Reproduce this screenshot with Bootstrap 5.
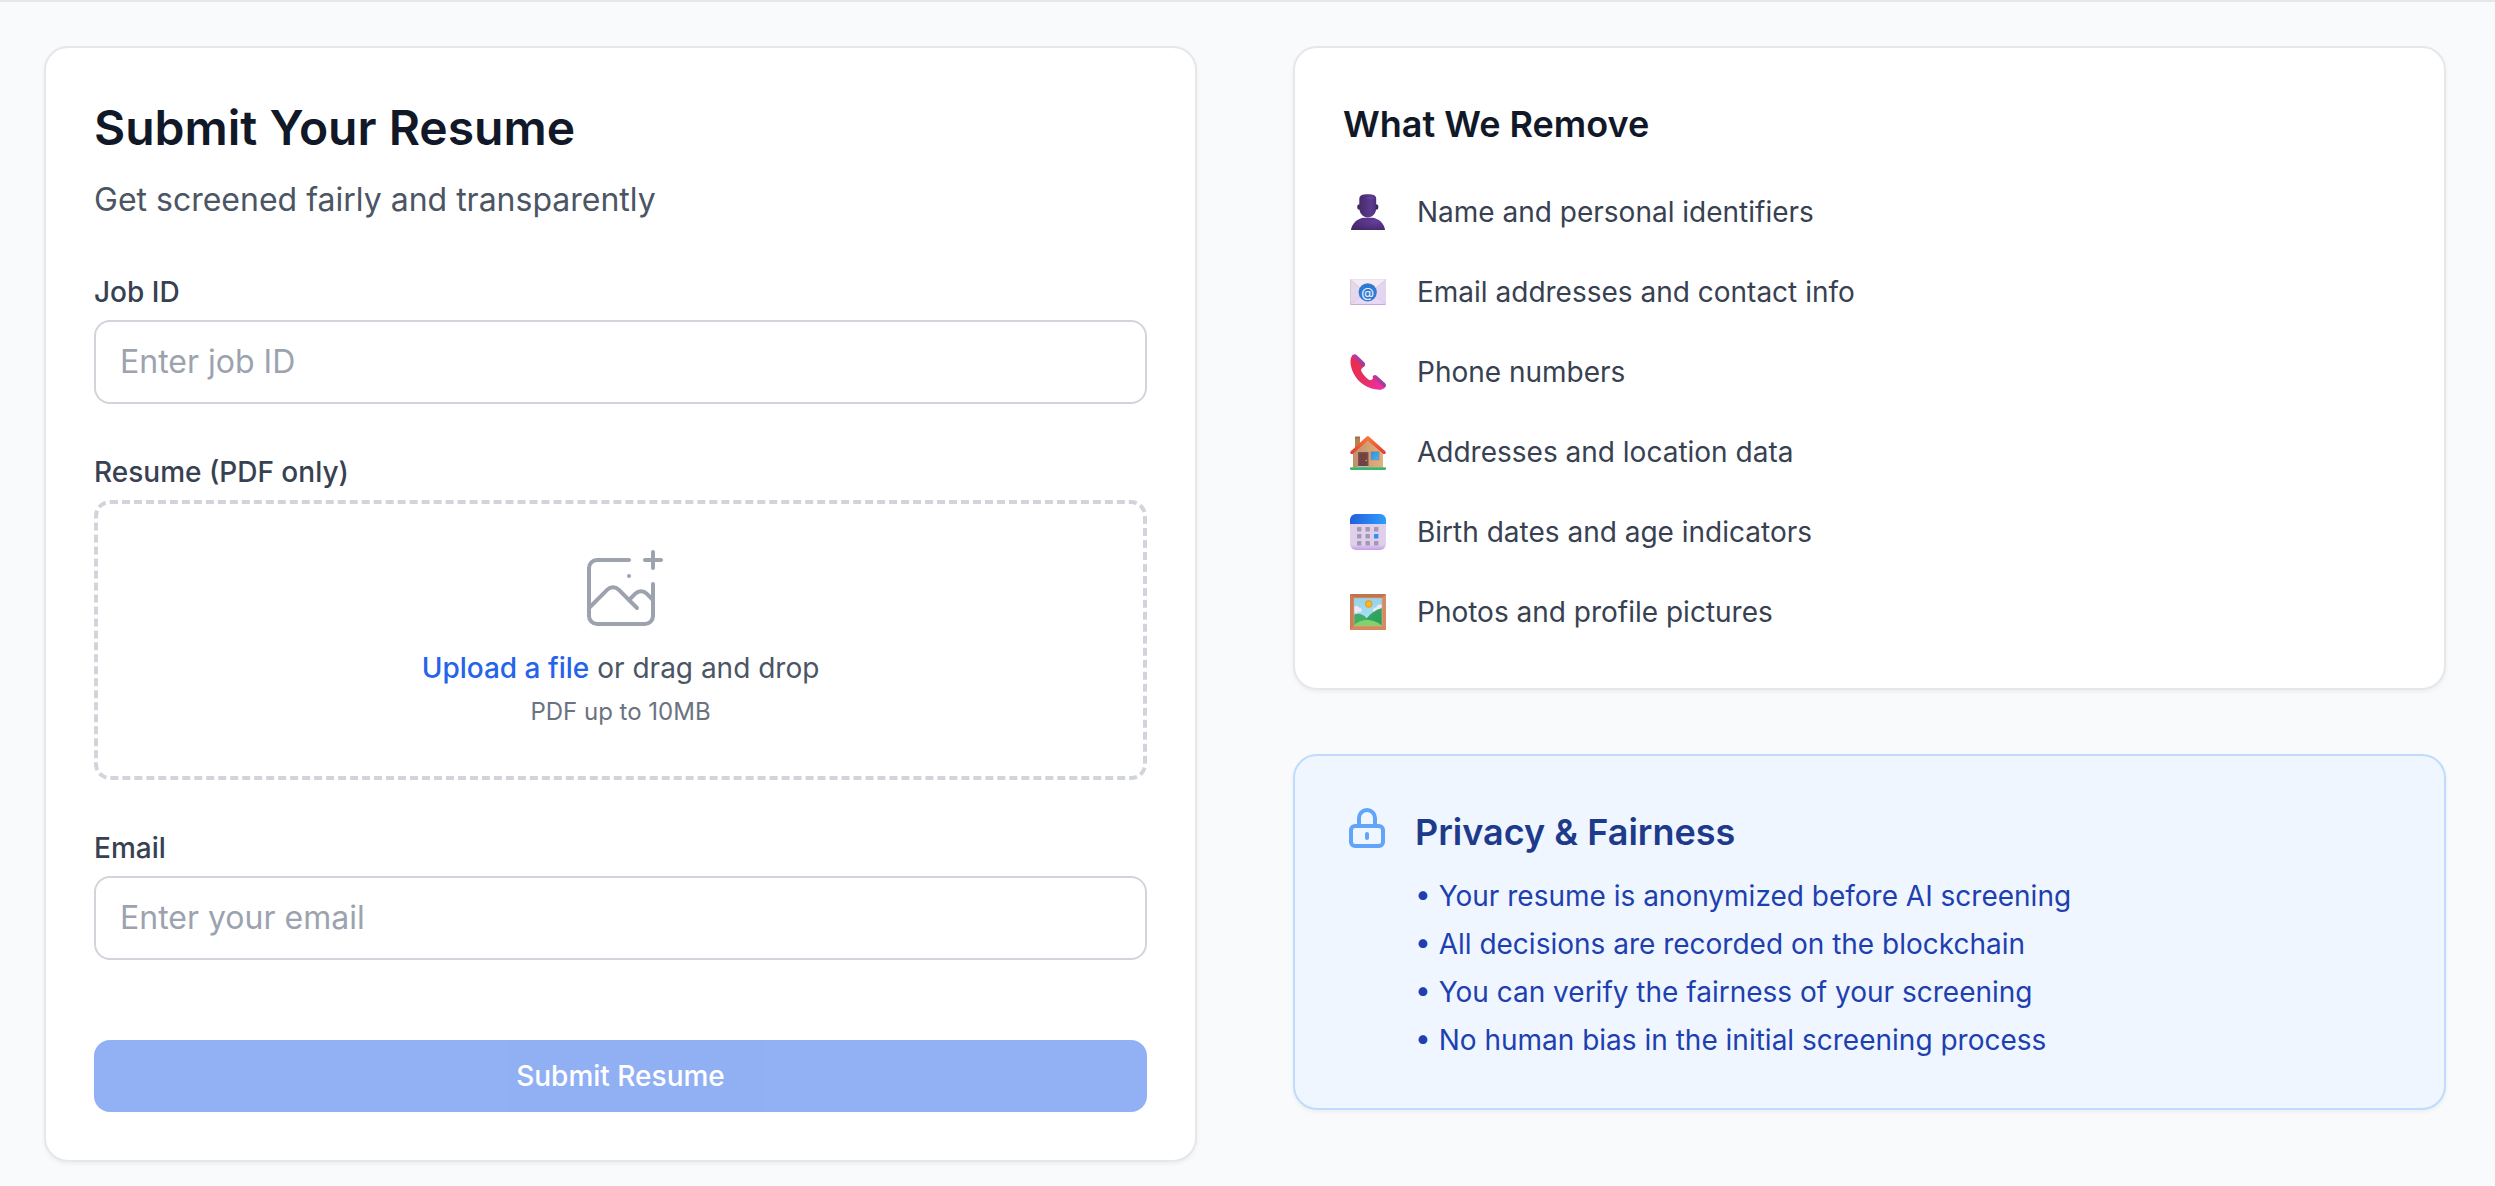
<!DOCTYPE html>
<html lang="en">
<head>
<meta charset="utf-8">
<meta name="viewport" content="width=device-width, initial-scale=1">
<title>Submit Your Resume</title>
<link href="https://cdn.jsdelivr.net/npm/bootstrap@5.3.0/dist/css/bootstrap.min.css" rel="stylesheet">
<style>
  body {
    font-family: Inter, "Liberation Sans", sans-serif;
    font-size: 28px;
    line-height: 40px;
    color: #374151;
    background: #f9fafb;
    border-top: 2px solid #e5e7eb;
  }
  .page-main { padding: 44px 49px 16px 44px; }
  .page-grid { --bs-gutter-x: 96px; }
  .stack-lg { gap: 64px; }
  .stack-md { gap: 48px; }
  .panel {
    --bs-card-border-width: 2px;
    --bs-card-border-color: #e5e7eb;
    --bs-card-border-radius: 24px;
    --bs-card-inner-border-radius: 22px;
    --bs-card-spacer-x: 48px;
    --bs-card-spacer-y: 48px;
    --bs-card-color: #374151;
    box-shadow: 0 2px 4px rgba(0, 0, 0, .05);
  }
  .panel-info {
    --bs-card-border-color: #bfdbfe;
    --bs-card-bg: #eff6ff;
    --bs-card-color: #1e40af;
  }
  .page-title { font-size: 48px; line-height: 64px; font-weight: 600; color: #111827; margin-bottom: 16px; }
  .page-sub { font-size: 32px; line-height: 48px; color: #4b5563; }
  .panel-title { font-size: 36px; line-height: 56px; font-weight: 600; color: #111827; }
  .panel-info .panel-title { color: #1e3a8a; margin-bottom: 16px; }
  .field-label { font-weight: 500; margin-bottom: 8px; display: block; }
  .field-input {
    font-size: 32px; line-height: 48px; padding: 16px 24px;
    border: 2px solid #d1d5db; border-radius: 16px; color: #111827;
  }
  .field-input::placeholder { color: #9ca3af; }
  .drop-zone { border: 4px dashed #d1d5db; border-radius: 16px; padding: 40px 48px 48px; gap: 8px; color: #4b5563; }
  .upload-link { color: #2563eb; font-weight: 500; cursor: pointer; }
  .drop-row { gap: 8px; }
  .drop-note { font-size: 24px; line-height: 32px; color: #6b7280; }
  .btn-submit {
    --bs-btn-font-size: 28px;
    --bs-btn-line-height: 40px;
    --bs-btn-font-weight: 500;
    --bs-btn-padding-y: 16px;
    --bs-btn-border-width: 0;
    --bs-btn-border-radius: 16px;
    --bs-btn-disabled-bg: #2563eb;
    --bs-btn-disabled-color: #fff;
    --bs-btn-disabled-opacity: .5;
    margin-top: 32px;
  }
  .remove-list { gap: 24px; margin-top: 32px; }
  .remove-list li { gap: 24px; min-height: 56px; }
  .icon-box { width: 50px; }
  .bullet-list li::before { content: "•\00a0"; }
  .bullet-list li + li { margin-top: 8px; }
</style>
</head>
<body>
<main class="page-main">
  <div class="row page-grid align-items-start">
    <div class="col-lg-6">
      <section class="card panel">
        <div class="card-body">
          <h1 class="page-title">Submit Your Resume</h1>
          <p class="page-sub mb-5">Get screened fairly and transparently</p>
          <form class="d-flex flex-column stack-md">
            <div>
              <label class="field-label" for="jobId">Job ID</label>
              <input class="form-control field-input" id="jobId" type="text" placeholder="Enter job ID">
            </div>
            <div>
              <span class="field-label" id="resumeLabel">Resume (PDF only)</span>
              <div class="drop-zone d-flex flex-column align-items-center">
                <svg width="96" height="96" viewBox="0 0 48 48" fill="none" stroke="#9ca3af" stroke-width="2" stroke-linecap="round" stroke-linejoin="round" aria-hidden="true"><path d="M28 8H12a4 4 0 00-4 4v20m32-12v8m0 0v8a4 4 0 01-4 4H12a4 4 0 01-4-4v-4m32-4l-3.172-3.172a4 4 0 00-5.656 0L28 28M8 32l9.172-9.172a4 4 0 015.656 0L28 28m0 0l4 4m4-24h8m-4-4v8m-12 4h.02"/></svg>
                <div class="d-flex flex-wrap justify-content-center drop-row">
                  <label class="upload-link" for="resume">Upload a file</label>
                  <input class="visually-hidden" id="resume" type="file" accept=".pdf" aria-describedby="resumeLabel">
                  <span>or drag and drop</span>
                </div>
                <div class="drop-note">PDF up to 10MB</div>
              </div>
            </div>
            <div>
              <label class="field-label" for="email">Email</label>
              <input class="form-control field-input" id="email" type="email" placeholder="Enter your email">
            </div>
            <button class="btn btn-primary btn-submit w-100" type="submit" disabled>Submit Resume</button>
          </form>
        </div>
      </section>
    </div>

    <div class="col-lg-6 d-flex flex-column stack-lg mt-5 mt-lg-0">
      <section class="card panel">
        <div class="card-body">
          <h2 class="panel-title mb-0">What We Remove</h2>
          <ul class="remove-list list-unstyled d-flex flex-column mb-0">
            <li class="d-flex align-items-center">
              <span class="icon-box d-flex justify-content-center flex-shrink-0">
                <svg width="36" height="36" viewBox="0 0 36 36" aria-hidden="true">
                  <defs>
                    <linearGradient id="headFill" x1="0" x2="1" y1="0" y2="0"><stop offset="0" stop-color="#472a68"/><stop offset=".7" stop-color="#5b3a90"/><stop offset="1" stop-color="#4d2d78"/></linearGradient>
                    <radialGradient id="bodyFill" cx=".7" cy=".3" r=".8"><stop offset="0" stop-color="#653f9c"/><stop offset="1" stop-color="#45276a"/></radialGradient>
                  </defs>
                  <path d="M1 36C1.500 29.500 8 24 14 23.700h8C28.500 24 34.500 29.500 35 36z" fill="url(#bodyFill)"/>
                  <ellipse cx="9" cy="13" rx="1.800" ry="2.800" fill="#3d2261"/><ellipse cx="26.600" cy="13" rx="1.800" ry="2.800" fill="#3d2261"/>
                  <path d="M9.300 5C9.300 1.500 12 .300 17.800.300S26.200 1.500 26.200 5v9c0 5.500-4 9.500-8.400 9.500S9.300 19.500 9.300 14z" fill="url(#headFill)"/>
                  <ellipse cx="20.500" cy="4" rx="4" ry="1.300" fill="#6b48a4" opacity=".6"/>
                </svg>
              </span>
              <span>Name and personal identifiers</span>
            </li>
            <li class="d-flex align-items-center">
              <span class="icon-box d-flex justify-content-center flex-shrink-0">
                <svg width="36" height="36" viewBox="0 0 36 36" aria-hidden="true">
                  <defs>
                    <linearGradient id="mailFill" x1="0" x2="1" y1="0" y2="1"><stop offset="0" stop-color="#e6dbe6"/><stop offset="1" stop-color="#e2d2f6"/></linearGradient>
                    <linearGradient id="mailEdge" x1="0" x2="1" y1="0" y2="0"><stop offset="0" stop-color="#cbb0c8"/><stop offset="1" stop-color="#cba2f3"/></linearGradient>
                  </defs>
                  <rect y="5" width="36" height="26" rx="1.500" fill="url(#mailEdge)"/>
                  <rect x=".5" y="5" width="35.500" height="25" rx="1.500" fill="url(#mailFill)"/>
                  <path d="M.5 29.500 14 19h8l13.500 10.500z" fill="#ead9f4"/>
                  <path d="M.8 5.500 16 18.500q2 1.500 4 0L35.500 5.500z" fill="#f3ebf3"/>
                  <path d="M.8 6 16 19q2 1.500 4 0L35.500 6M1 29.500 13 20.500M35 29.500 23 20.500" fill="none" stroke="#d4c4da" stroke-width=".7"/>
                  <circle cx="17.700" cy="18.300" r="9.100" fill="#2f7bd2"/>
                  <text x="17.700" y="22.600" text-anchor="middle" font-family="Inter, sans-serif" font-size="13" font-weight="500" fill="#e4ecfa">@</text>
                </svg>
              </span>
              <span>Email addresses and contact info</span>
            </li>
            <li class="d-flex align-items-center">
              <span class="icon-box d-flex justify-content-center flex-shrink-0">
                <svg width="36" height="36" viewBox="0 0 36 36" aria-hidden="true">
                  <defs>
                    <linearGradient id="phoneFill" x1="0" x2="1" y1=".2" y2=".9"><stop offset="0" stop-color="#f02a4c"/><stop offset=".5" stop-color="#e33163"/><stop offset="1" stop-color="#f42bb0"/></linearGradient>
                    <linearGradient id="phoneCap" x1="0" x2="1" y1="0" y2="1"><stop offset="0" stop-color="#c733a0"/><stop offset="1" stop-color="#8f4596"/></linearGradient>
                  </defs>
                  <path d="M3 1C.5 3 .2 7 .8 11c1.400 8 5.700 14.500 12.200 19.300 5 3.700 11.500 5.700 17.500 5.400 2.500-.2 4.500-1.700 5.300-3.700L25 22l-3 3.500c-1 1-2.300.8-3.500-.1-3-2.300-5.300-4.800-7-7.900-.7-1.300-.5-2.300.5-3.200L15 11.500z" fill="url(#phoneFill)"/>
                  <path d="M2.500 1.300C3.800-.1 5.300-.2 6.600.9l7.600 7.400c1.300 1.300 1.200 2.800 0 3.900-.6.600-1.200.6-1.900 0L2.700 3.300c-.7-.7-.8-1.400-.2-2z" fill="url(#phoneCap)"/>
                  <path d="M23 22c1.100-1.200 2.500-1.300 3.800-.2l8 7.200c1.400 1.200 1.500 2.500.5 3.800-.5.600-1.200.6-1.800 0l-10.300-8.900c-.7-.6-.8-1.200-.2-1.900z" fill="url(#phoneCap)"/>
                </svg>
              </span>
              <span>Phone numbers</span>
            </li>
            <li class="d-flex align-items-center">
              <span class="icon-box d-flex justify-content-center flex-shrink-0">
                <svg width="36" height="36" viewBox="0 0 36 36" aria-hidden="true">
                  <defs>
                    <linearGradient id="wallFill" x1="0" x2="1" y1="0" y2="0"><stop offset="0" stop-color="#c08f68"/><stop offset="1" stop-color="#e3b181"/></linearGradient>
                    <linearGradient id="roofFill" x1="0" x2="0" y1="0" y2="1"><stop offset="0" stop-color="#ff7d35"/><stop offset="1" stop-color="#dc3a35"/></linearGradient>
                    <linearGradient id="paneFill" x1="0" x2="1" y1="0" y2="1"><stop offset="0" stop-color="#2e8fe0"/><stop offset="1" stop-color="#38b6ff"/></linearGradient>
                  </defs>
                  <rect x="5" y="3" width="5" height="12" rx=".5" fill="#b18355"/><rect x="5" y="2.500" width="5" height="2" rx=".5" fill="#9d6e47"/>
                  <path d="M3 18 17.800 5 33 18v15.500H3z" fill="url(#wallFill)"/>
                  <rect x="8" y="18" width="10.500" height="15" rx=".8" fill="#7e4f49"/><rect x="9.300" y="19.500" width="7.800" height="13" fill="#704244"/><circle cx="16.200" cy="26.500" r=".8" fill="#d9a38a"/>
                  <rect x="7.500" y="32" width="11.500" height="2" fill="#c9b5c7"/>
                  <rect x="20.500" y="17.300" width="9" height="9" rx=".6" fill="#b28663"/><rect x="21.200" y="18" width="7.600" height="7.600" fill="url(#paneFill)"/><path d="M25 18v7.600M21.200 21.800h7.600" stroke="#46a1e4" stroke-width=".5"/>
                  <path d="M16.700 2.400q1.100-.8 2.200 0L35.300 17.300q1 1.200 0 2.400-1.200.8-2.200 0L17.800 6.500 2.900 19.700q-1.200.8-2.200 0-1-1.200 0-2.400z" fill="url(#roofFill)"/>
                  <rect y="33.300" width="36" height="2.700" rx="1.200" fill="#39b967"/>
                </svg>
              </span>
              <span>Addresses and location data</span>
            </li>
            <li class="d-flex align-items-center">
              <span class="icon-box d-flex justify-content-center flex-shrink-0">
                <svg width="36" height="36" viewBox="0 0 36 36" aria-hidden="true">
                  <defs>
                    <linearGradient id="calTop" x1="0" x2="1" y1="0" y2="0"><stop offset="0" stop-color="#245fdd"/><stop offset="1" stop-color="#2e9dfd"/></linearGradient>
                    <linearGradient id="calBody" x1="0" x2="0" y1="0" y2="1"><stop offset="0" stop-color="#e0d0ea"/><stop offset=".85" stop-color="#e0cfec"/><stop offset="1" stop-color="#c59ded"/></linearGradient>
                  </defs>
                  <rect width="36" height="36" rx="6" fill="url(#calBody)"/>
                  <path d="M0 10V6a6 6 0 016-6h24a6 6 0 016 6v4z" fill="url(#calTop)"/>
                  <g fill="#a398b2"><rect x="7" y="13" width="4.400" height="4.400" rx=".4"/><rect x="15.500" y="13" width="4.400" height="4.400" rx=".4"/><rect x="24" y="13" width="4.400" height="4.400" rx=".4"/><rect x="7" y="20" width="4.400" height="4.400" rx=".4"/><rect x="15.500" y="20" width="4.400" height="4.400" rx=".4"/><rect x="7" y="27" width="4.400" height="4.400" rx=".4"/><rect x="15.500" y="27" width="4.400" height="4.400" rx=".4"/><rect x="24" y="27" width="4.400" height="4.400" rx=".4"/></g>
                  <rect x="24" y="20" width="4.400" height="4.400" rx=".4" fill="#2c91f0"/>
                </svg>
              </span>
              <span>Birth dates and age indicators</span>
            </li>
            <li class="d-flex align-items-center">
              <span class="icon-box d-flex justify-content-center flex-shrink-0">
                <svg width="36" height="36" viewBox="0 0 36 36" aria-hidden="true">
                  <defs>
                    <linearGradient id="skyFill" x1="0" x2="0" y1="0" y2="1"><stop offset="0" stop-color="#91d3ed"/><stop offset="1" stop-color="#b5e4f2"/></linearGradient>
                    <linearGradient id="hillFill" x1="0" x2="1" y1="0" y2="1"><stop offset="0" stop-color="#3ea968"/><stop offset="1" stop-color="#249f58"/></linearGradient>
                    <clipPath id="photoClip"><rect x="4" y="4" width="28" height="28"/></clipPath>
                  </defs>
                  <rect width="36" height="36" rx=".8" fill="#c87d56"/>
                  <path d="M0 0h36l-4 4H4z" fill="#bd7450"/><path d="M36 0v36l-4-4V4z" fill="#d68c62"/><path d="M0 36h36l-4-4H4z" fill="#d4895e"/>
                  <g clip-path="url(#photoClip)">
                    <rect x="4" y="4" width="28" height="28" fill="url(#skyFill)"/>
                    <g fill="#eee9fa"><circle cx="6" cy="15.500" r="3.500"/><circle cx="9.500" cy="16" r="2.300"/><circle cx="30" cy="14" r="3.600"/><circle cx="26" cy="16.500" r="3"/></g>
                    <circle cx="18.700" cy="10" r="3.700" fill="#e99a20"/><circle cx="18.700" cy="10" r="2.600" fill="#ffb52e"/>
                    <path d="M17 24c4-5 9-8.500 15-10v18H14z" fill="url(#hillFill)"/>
                    <path d="M4 21c4-2.300 8-1.300 12 2.500L24 32H4z" fill="#40ad68"/>
                    <path d="M4 32c2-3.500 7-6 13-6s12 2.500 15 6z" fill="#7fd26c"/>
                  </g>
                  <rect x="4" y="4" width="28" height="28" fill="none" stroke="#e9a982" stroke-width=".6"/>
                </svg>
              </span>
              <span>Photos and profile pictures</span>
            </li>
          </ul>
        </div>
      </section>

      <section class="card panel panel-info">
        <div class="card-body d-flex gap-4">
          <svg class="flex-shrink-0" width="48" height="48" viewBox="0 0 24 24" fill="none" stroke="#60a5fa" stroke-width="2" stroke-linecap="round" stroke-linejoin="round" aria-hidden="true"><path d="M12 15v2m-6 4h12a2 2 0 002-2v-6a2 2 0 00-2-2H6a2 2 0 00-2 2v6a2 2 0 002 2zm10-10V7a4 4 0 00-8 0v4h8z"/></svg>
          <div>
            <h2 class="panel-title">Privacy &amp; Fairness</h2>
            <ul class="bullet-list list-unstyled mb-0">
              <li>Your resume is anonymized before AI screening</li>
              <li>All decisions are recorded on the blockchain</li>
              <li>You can verify the fairness of your screening</li>
              <li>No human bias in the initial screening process</li>
            </ul>
          </div>
        </div>
      </section>
    </div>
  </div>
</main>
<script src="https://cdn.jsdelivr.net/npm/bootstrap@5.3.0/dist/js/bootstrap.bundle.min.js"></script>
</body>
</html>
